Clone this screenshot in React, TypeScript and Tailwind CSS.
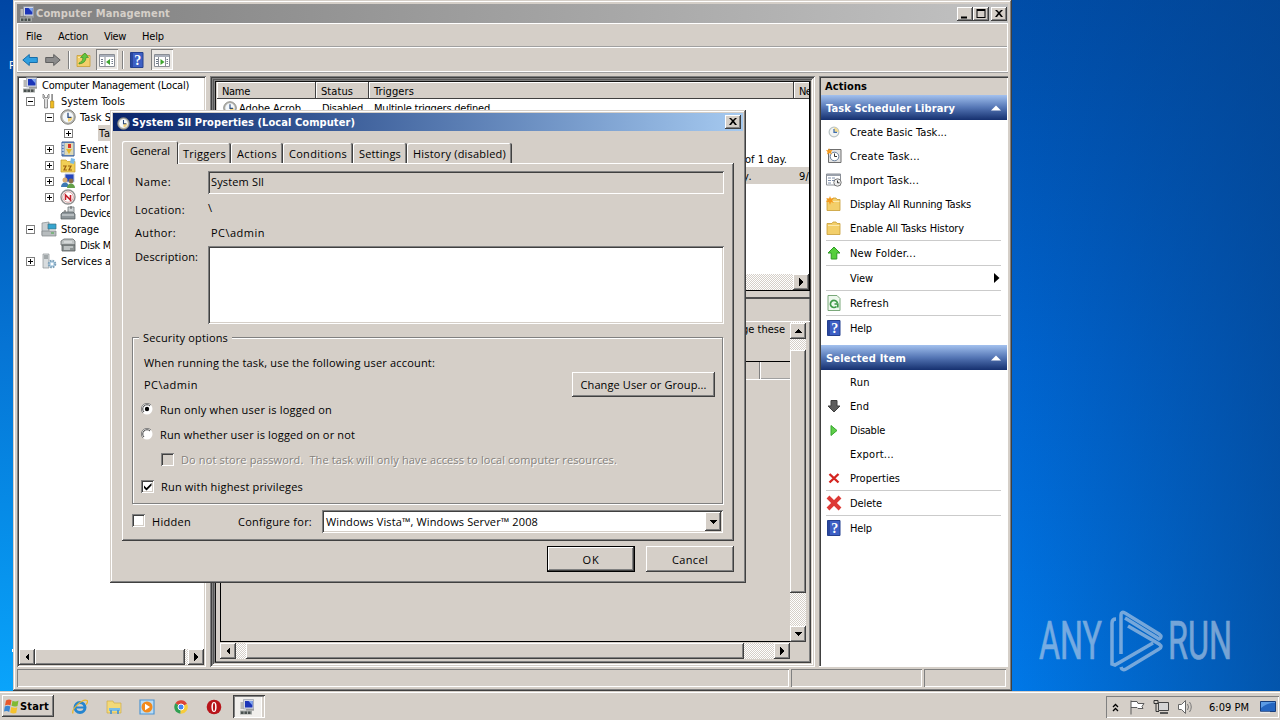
import { useLayoutEffect, useRef, useState } from 'react';
import type { ReactNode } from 'react';

const raised = 'bg-[#d5cfc8] shadow-[inset_-1px_-1px_#404040,inset_1px_1px_#fff,inset_-2px_-2px_#808080]';
const sunken = 'shadow-[inset_1px_1px_#808080,inset_-1px_-1px_#fff,inset_2px_2px_#404040,inset_-2px_-2px_#d5cfc8]';
const dither = 'bg-[repeating-conic-gradient(#fff_0_25%,#d5cfc8_0_50%)] bg-[length:2px_2px]';

// Spreads the letters so the label takes exactly `w` pixels
function Txt({ w, children, className = '' }: { w?: number; children: string; className?: string }) {
  const ref = useRef<HTMLSpanElement>(null);
  const [spacing, setSpacing] = useState(0);

  useLayoutEffect(() => {
    if (!ref.current || !w) return;
    const natural = ref.current.getBoundingClientRect().width;
    setSpacing((w - natural) / children.length);
  }, [w, children]);

  return (
    <span ref={ref} className={`block w-max whitespace-pre shrink-0 pt-(--drop) ${className}`} style={{ letterSpacing: `${spacing}px` }}>
      {children}
    </span>
  );
}

function Svg({ children, size = 16 }: { children: ReactNode; size?: number }) {
  return (
    <svg width={size} height={size} viewBox="0 0 16 16" className="shrink-0">
      {children}
    </svg>
  );
}

const ClockIcon = ({ size = 16 }: { size?: number }) => (
  <Svg size={size}>
    <circle cx="8" cy="8" r="7.2" fill="#b9b9b4" stroke="#83837e" strokeWidth="1" />
    <circle cx="8" cy="8" r="5.4" fill="#f4f8fb" />
    <path d="M8 8h4.5A5 5 0 0 1 8 12.8z" fill="#f3d27a" />
    <path d="M8 3.8V8.4H11.4" stroke="#2b4a7c" strokeWidth="1.3" fill="none" />
  </Svg>
);

const BasicTaskIcon = () => (
  <Svg size={12}>
    <circle cx="8" cy="8" r="6.5" fill="#f1f3f2" stroke="#b9c3c4" strokeWidth="1.6" />
    <path d="M8 2a6 6 0 0 1 6 6H8z" fill="#f5dc92" />
    <path d="M8 4V8.6H12" stroke="#3f6fb0" strokeWidth="1.7" fill="none" />
  </Svg>
);

const ComputerIcon = () => (
  <Svg>
    <path d="M4.5 .5h10v9.500h-10z" fill="#d4d8e2" stroke="#8a90a0" strokeWidth=".6" />
    <path d="M6 2h7.500v6.500H6z" fill="#1b35b8" />
    <path d="M9.500 2h4v4.500z" fill="#7fa4ee" />
    <path d="M1.500 3h2.500v7H1.500z" fill="#b9b9b6" />
    <path d="M7 10h8v1.700H7z" fill="#9b9c9c" />
    <path d="M1 11.500h12v4H1z" fill="#a2a7a5" />
    <path d="M2 12.500h2.500v2.500H2zM5.500 12.500h2.500v2.500H5.500zM9 12.500h2.500v2.500H9z" fill="#4a514f" />
  </Svg>
);

const ToolsIcon = () => (
  <Svg>
    <path d="M2 1v4l1.500 1.500V15h3V6.500L8 5V1L6.500 2.500v2h-3v-2z" fill="#dedede" stroke="#777" strokeWidth=".8" />
    <path d="M10.300 1h1.600v7h-1.600z" fill="#888" />
    <path d="M9.500 8h3.300v7H9.500z" fill="#eebb22" stroke="#a87d10" strokeWidth=".6" />
  </Svg>
);

const EventIcon = () => (
  <Svg>
    <path d="M2 1h12v14H2z" fill="#6d93c9" stroke="#3d5f95" />
    <path d="M4.500 2h9v12h-9z" fill="#dfd9b4" />
    <path d="M8 3h3v4H8z" fill="#d93327" />
    <path d="M6 8h6l-3 5z" fill="#e4b82c" />
    <path d="M2 3h2M2 6h2M2 9h2M2 12h2" stroke="#fff" />
  </Svg>
);

const SharedIcon = () => (
  <Svg>
    <path d="M1 3h5l1.500 1.500H15V15H1z" fill="#f1cf55" stroke="#c19a2a" strokeWidth=".7" />
    <path d="M11 1l4 1-1 5-4-1z" fill="#79b9e8" />
    <path d="M3 9h3l-2 4h3M8 9h3l-2 4h3" stroke="#9b5f0f" fill="none" strokeWidth="1.200" />
  </Svg>
);

const UsersIcon = () => (
  <Svg>
    <path d="M5 1h9v8H5z" fill="#2545bd" stroke="#bcc6dd" />
    <circle cx="5" cy="7" r="2.500" fill="#d9aa72" />
    <path d="M1 14c0-6 8-6 8 0z" fill="#3d78b4" />
    <circle cx="11" cy="8" r="2.400" fill="#8b6b4a" />
    <path d="M7 15c0-6 8-6 8 0z" fill="#63a04a" />
  </Svg>
);

const PerfIcon = () => (
  <Svg>
    <circle cx="8" cy="8" r="7" fill="#fff" stroke="#8f8f8f" strokeWidth="1.400" />
    <circle cx="8" cy="8" r="5.300" fill="#fff" stroke="#c98a8a" strokeWidth=".8" />
    <path d="M5.500 11V6l5 5V6" stroke="#c4202b" strokeWidth="1.600" fill="none" />
  </Svg>
);

const DeviceIcon = () => (
  <Svg>
    <path d="M8 2h6v6H8z" fill="#cfd4d6" stroke="#70777a" strokeWidth=".8" />
    <path d="M5 5v3M11 1v3" stroke="#555" />
    <path d="M1 9l2-2h10l2 2v5H1z" fill="#8d9599" stroke="#545b5e" strokeWidth=".7" />
    <path d="M2 10h12" stroke="#dfe4e6" />
  </Svg>
);

const StorageIcon = () => (
  <Svg>
    <path d="M1 2l7-1v13H1z" fill="#c8ced1" stroke="#858b8e" strokeWidth=".7" />
    <path d="M7 3h8v5H7z" fill="#36a5cf" stroke="#3e707f" strokeWidth=".7" />
    <path d="M1 10h14v5H1z" fill="#b7bcbe" stroke="#7e8486" strokeWidth=".7" />
    <path d="M10 12h3" stroke="#4a4" />
  </Svg>
);

const DiskIcon = () => (
  <Svg>
    <path d="M1 4l3-2h9l2 2v4H1z" fill="#bfc3c3" stroke="#636868" strokeWidth=".8" />
    <path d="M2 8h13v6H2z" fill="#8e9494" stroke="#555b5b" strokeWidth=".8" />
    <path d="M4 5h8M4 10h9M4 12h6" stroke="#ecefef" />
  </Svg>
);

const ServicesIcon = () => (
  <Svg>
    <path d="M2 1h6v14H2z" fill="#d8dcde" stroke="#8e9497" strokeWidth=".7" />
    <path d="M3 3h4M3 5h4" stroke="#6d7477" />
    <circle cx="11" cy="11" r="3.300" fill="#b7d3e6" stroke="#7ba0ba" strokeWidth="2" strokeDasharray="1.6 1" />
    <circle cx="11" cy="11" r="1.300" fill="#fff" />
  </Svg>
);

const HelpIcon = () => (
  <Svg>
    <path d="M1.500 .5h12.500v15H1.500z" fill="#3d5fc4" stroke="#24408f" />
    <path d="M2 1h2v14H2z" fill="#2a479f" />
    <text x="8.700" y="13" textAnchor="middle" fontSize="14" fontWeight="bold" fill="#fff" fontFamily="Liberation Serif">?</text>
  </Svg>
);

const FolderIcon = ({ star = false, up = false }: { star?: boolean; up?: boolean }) => (
  <Svg>
    <path d="M1 4V14.500h13V3.500h-3l-1-1.500H7L6 3.500H1z" fill="#f3cf6a" stroke="#c79d35" strokeWidth=".8" />
    <path d="M2 5.500h11.400" stroke="#fbe9ae" />
    {star && <path d="M4 0l1 2.500L8 2 6 4.500 8 7 5 6 4 9 3 6 0 6l2-2L0 2l3 .5z" fill="#f59a1c" />}
    {up && <path d="M3 11q4-1 4-5.500H4.500L9 1l3.500 4.500H10Q10 11 3 12z" fill="#62c63e" stroke="#3c8f24" strokeWidth=".7" />}
  </Svg>
);

const TaskIcon = () => (
  <Svg>
    <path d="M2.500 1.500h12.500v13H2.500z" fill="#e3e3e3" stroke="#6f6f6f" />
    <circle cx="8.500" cy="8.500" r="4.300" fill="#fff" stroke="#687f9c" />
    <path d="M8.500 5.500v3H11" stroke="#333" fill="none" />
    <path d="M3 0l1 2.200L6.500 2 5 4l1 2.500L3.500 5 1 6.500 1.500 4 0 2l2.200.2z" fill="#f59a1c" />
  </Svg>
);

const ImportIcon = () => (
  <Svg>
    <path d="M.5 2h14v11H.5z" fill="#fff" stroke="#8a8f96" />
    <path d="M1 3h13" stroke="#9aa0aa" strokeWidth="2" />
    <path d="M2 6h3M6 6h3M2 8.500h3M6 8.500h2M2 11h3" stroke="#7d8da8" />
    <circle cx="11.500" cy="10.500" r="3.700" fill="#eee" stroke="#777" />
    <path d="M11.500 8.500v2.300h2" stroke="#333" fill="none" />
  </Svg>
);

const ArrowIcon = ({ fill, stroke, d }: { fill: string; stroke: string; d: string }) => (
  <Svg>
    <path d={d} fill={fill} stroke={stroke} strokeLinejoin="round" />
  </Svg>
);

const upPath = 'M8 2l6 6h-3.200v6H5.200V8H2z';
const downPath = 'M8 14l6-6h-3V2.500H5V8H2z';
const leftPath = 'M.8 8l6.500-5.500v3h8v5h-8v3z';
const rightPath = 'M15.200 8L8.700 2.500v3h-8v5h8v3z';

const RefreshIcon = () => (
  <Svg>
    <path d="M2 .5h9l3 3v12H2z" fill="#eef8ee" stroke="#7aa87a" />
    <path d="M10.500 11.500A3.600 3.600 0 1 1 11.500 8M11.800 12.500V9H8.500" fill="none" stroke="#3f9a48" strokeWidth="1.700" />
  </Svg>
);

const CrossIcon = ({ big = false }: { big?: boolean }) => (
  <Svg>
    {big ? (
      <path d="M2 2l12 12M14 2L2 14" stroke="#dd3a36" strokeWidth="4" />
    ) : (
      <path d="M3.500 4l9 8.500M12.500 4l-9 8.500" stroke="#d4241f" strokeWidth="2.400" />
    )}
  </Svg>
);

const PaneIcon = ({ flip = false }: { flip?: boolean }) => (
  <Svg>
    <path d="M.5 2.500h15v12H.5z" fill="#fff" stroke="#8a8e95" />
    <path d="M1 4h14" stroke="#aab0bb" strokeWidth="2" />
    <path d={flip ? 'M11.500 5v9M4.500 5v9' : 'M6 5v9'} stroke="#8a8e95" />
    <path d="M2 7.500h2M2 9.500h2M2 11.500h2M12.500 7.500H14M12.500 9.500H14M12.500 11.500H14" stroke="#707a8a" />
    <path d={flip ? 'M6.500 7l4 3-4 3z' : 'M11 7l-4 3 4 3z'} fill="#3fa52f" />
  </Svg>
);

function Tri({ dir }: { dir: 'left' | 'right' | 'up' | 'down' }) {
  const paths = { left: 'M6 0v8L2 4z', right: 'M2 0v8l4-4z', up: 'M0 6h8L4 2z', down: 'M0 2h8L4 6z' };
  return (
    <svg width="8" height="8" shapeRendering="crispEdges">
      <path d={paths[dir]} />
    </svg>
  );
}

function ScrollButton({ dir }: { dir: 'left' | 'right' | 'up' | 'down' }) {
  return <button className={`w-4 h-4 shrink-0 flex items-center justify-center ${raised}`}><Tri dir={dir} /></button>;
}

function CaptionButton({ kind }: { kind: 'min' | 'max' | 'close' }) {
  const paths = { min: 'M3 9.500h6v2H3z', max: 'M2.500 2h9v9h-9zM3.500 4v6h7V4z', close: 'M3 3h2l2 2 2-2h2L8 6l3 4H9L7 7.500 5 10H3l3-4z' };
  return (
    <button className={`w-4 h-3.5 shrink-0 flex items-center justify-center ${raised}`}>
      <svg width="14" height="14"><path d={paths[kind]} fillRule="evenodd" /></svg>
    </button>
  );
}

type Node = { label: string; w?: number; level: number; exp?: '+' | '-'; icon?: ReactNode; selected?: boolean };

const tree: Node[] = [
  { label: 'Computer Management (Local)', w: 147, level: 0, icon: <ComputerIcon /> },
  { label: 'System Tools', w: 64, level: 1, exp: '-', icon: <ToolsIcon /> },
  { label: 'Task S', w: 31, level: 2, exp: '-', icon: <ClockIcon /> },
  { label: 'Ta', w: 12, level: 3, exp: '+', selected: true },
  { label: 'Event', w: 28, level: 2, exp: '+', icon: <EventIcon /> },
  { label: 'Share', w: 29, level: 2, exp: '+', icon: <SharedIcon /> },
  { label: 'Local U', w: 35, level: 2, exp: '+', icon: <UsersIcon /> },
  { label: 'Perfor', w: 30, level: 2, exp: '+', icon: <PerfIcon /> },
  { label: 'Device', w: 32, level: 2, icon: <DeviceIcon /> },
  { label: 'Storage', w: 38, level: 1, exp: '-', icon: <StorageIcon /> },
  { label: 'Disk M', w: 31, level: 2, icon: <DiskIcon /> },
  { label: 'Services a', w: 50, level: 1, exp: '+', icon: <ServicesIcon /> },
];

const indents = ['pl-[5px]', 'pl-[9px]', 'pl-[28px]', 'pl-[47px]'];

function TreeRow({ node }: { node: Node }) {
  return (
    <div className={`h-4 flex items-center ${indents[node.level]}`}>
      {node.level > 0 && (
        <span className="w-[15px] shrink-0">
          {node.exp && (
            <svg width="9" height="9" shapeRendering="crispEdges">
              <path d="M.5.5h8v8h-8z" fill="#fff" stroke="#808080" />
              <path d={node.exp === '+' ? 'M2 4.500h5M4.500 2v5' : 'M2 4.500h5'} stroke="#000" />
            </svg>
          )}
        </span>
      )}
      <span className="w-4 shrink-0">{node.icon}</span>
      <span className={`ml-[3px] pl-px flex items-center h-4 ${node.selected ? 'bg-[#d5cfc8]' : ''}`}>
        <Txt w={node.w}>{node.label}</Txt>
      </span>
    </div>
  );
}

type Action = { label: string; w: number; icon?: ReactNode; sep?: boolean; arrow?: boolean };

const libraryActions: Action[] = [
  { label: 'Create Basic Task...', w: 97, icon: <BasicTaskIcon /> },
  { label: 'Create Task...', w: 70, icon: <TaskIcon /> },
  { label: 'Import Task...', w: 69, icon: <ImportIcon /> },
  { label: 'Display All Running Tasks', w: 121, icon: <FolderIcon star /> },
  { label: 'Enable All Tasks History', w: 114, icon: <FolderIcon />, sep: true },
  { label: 'New Folder...', w: 66, icon: <ArrowIcon d={upPath} fill="#55cf3c" stroke="#2f9a25" />, sep: true },
  { label: 'View', w: 23, sep: true, arrow: true },
  { label: 'Refresh', w: 39, icon: <RefreshIcon />, sep: true },
  { label: 'Help', w: 22, icon: <HelpIcon /> },
];

const itemActions: Action[] = [
  { label: 'Run', w: 20 },
  { label: 'End', w: 19, icon: <ArrowIcon d={downPath} fill="#5c5c5c" stroke="#3e3e3e" /> },
  { label: 'Disable', w: 35, icon: <ArrowIcon d="M5 3.500l6 5-6 5z" fill="#5fcf4a" stroke="#35a52c" /> },
  { label: 'Export...', w: 44 },
  { label: 'Properties', w: 50, icon: <CrossIcon />, sep: true },
  { label: 'Delete', w: 32, icon: <CrossIcon big />, sep: true },
  { label: 'Help', w: 22, icon: <HelpIcon /> },
];

function ActionGroup({ title, w, items }: { title: string; w: number; items: Action[] }) {
  return (
    <section>
      <h3 className="h-[25px] pl-[5px] pr-[6px] flex items-center justify-between text-white font-bold bg-linear-to-b from-[#a3c1ee] via-[#5576b5] to-[#16306f]">
        <Txt w={w}>{title}</Txt>
        <svg width="10" height="6"><path d="M0 5.500L5 .5l5 5z" fill="#fff" /></svg>
      </h3>
      <ul>
        {items.map((a) => (
          <li key={a.label}>
            <div className="h-6 flex items-center pl-[5px] pr-[7px]">
              <span className="w-4 mr-2 shrink-0 flex justify-center">{a.icon}</span>
              <Txt w={a.w}>{a.label}</Txt>
              {a.arrow && <svg width="6" height="10" className="ml-auto"><path d="M0 0l5.500 5L0 10z" /></svg>}
            </div>
            {a.sep && <div className="h-px ml-[5px] mr-[6px] bg-[#cbcbcb]" />}
          </li>
        ))}
      </ul>
    </section>
  );
}

const columns = [
  { label: 'Name', box: 'w-[99px]', w: 28 },
  { label: 'Status', box: 'w-[53px]', w: 32 },
  { label: 'Triggers', box: 'w-[425px]', w: 40 },
  { label: 'Ne', box: 'w-[20px]', w: 12 },
];

function TaskList() {
  return (
    <div className="h-[209px] flex flex-col bg-white border-r border-b border-black overflow-hidden">
      <div className="h-[17px] shrink-0 flex">
        {columns.map((c) => (
          <div key={c.label} className={`${c.box} shrink-0 pl-[5px] flex items-center bg-[#d5cfc8] shadow-[inset_-1px_-1px_#404040,inset_1px_1px_#fff]`}>
            <Txt w={c.w}>{c.label}</Txt>
          </div>
        ))}
      </div>
      <div className="h-[17px] shrink-0 flex items-center">
        <span className="w-[105px] shrink-0 pl-[6px] flex items-center gap-[2px]">
          <ClockIcon size={14} /><Txt w={62}>Adobe Acrob</Txt>
        </span>
        <span className="w-[52px]"><Txt w={41}>Disabled</Txt></span>
        <Txt w={116}>Multiple triggers defined</Txt>
      </div>
      <div className="h-[34px] shrink-0" />
      <div className="h-[17px] shrink-0 flex items-center pl-[528px]"><Txt w={42}>of 1 day.</Txt></div>
      <div className="h-[17px] shrink-0 flex items-center bg-[#d5cfc8] pl-[526px]">
        <span className="w-[56px] shrink-0"><Txt w={10}>y.</Txt></span>
        <Txt w={10}>9/</Txt>
      </div>
      <div className={`mt-auto h-4 flex justify-end ${dither}`}><ScrollButton dir="right" /></div>
    </div>
  );
}

function DetailPane() {
  return (
    <div className="mt-[6px] flex-1 flex flex-col border-t-2 border-t-[#505050] pl-[3px]">
      <div className="h-[22px] shrink-0" />
      <div className="flex-1 flex border-t border-white min-h-0">
        <div className="flex-1 border-l border-b border-black flex flex-col">
          <div className="h-[39px] pl-[521px] [--drop:1px]"><Txt w={43}>ge these</Txt></div>
          <div className="h-[19px] border-t border-t-black border-b border-b-white flex justify-end">
            <div className="w-[31px] border-l border-[#808080] shadow-[inset_1px_0_#fff,inset_0_-1px_#a0a0a0]" />
          </div>
        </div>
        <div className={`w-4 mr-[4px] pt-px flex flex-col ${dither}`}>
          <ScrollButton dir="up" />
          <div className={`mt-[11px] h-[243px] ${raised}`} />
          <div className="flex-1" />
          <ScrollButton dir="down" />
        </div>
      </div>
      <div className={`h-4 mt-px mb-[3px] mr-[20px] flex ${dither}`}>
        <ScrollButton dir="left" />
        <div className={`ml-[10px] w-[498px] ${raised}`} />
        <div className="flex-1" />
        <ScrollButton dir="right" />
      </div>
    </div>
  );
}

function ManagementWindow() {
  return (
    <div className="absolute left-[13px] top-0 w-[999px] h-[691px] p-[4px] flex flex-col bg-[#d5cfc8] shadow-[inset_-1px_-1px_#404040,inset_1px_1px_#d5cfc8,inset_-2px_-2px_#808080,inset_2px_2px_#fff]">
      <header className="h-[19px] shrink-0 pl-[2px] pr-px flex items-center bg-linear-to-r from-[#808080] to-[#c2c2c2] text-[#d5cfc8] font-bold">
        <ComputerIcon />
        <Txt w={134} className="ml-px [--drop:0px]">Computer Management</Txt>
        <div className="ml-auto flex">
          <CaptionButton kind="min" />
          <CaptionButton kind="max" />
          <span className="w-[2px]" />
          <CaptionButton kind="close" />
        </div>
      </header>

      <nav className="h-[25px] shrink-0 flex items-center pl-[8px] border border-white shadow-[inset_0_-1px_#a0a0a0]">
        <Txt w={16} className="mr-4">File</Txt>
        <Txt w={30} className="mr-4">Action</Txt>
        <Txt w={22} className="mr-4">View</Txt>
        <Txt w={22}>Help</Txt>
      </nav>
      <div className="h-6 shrink-0 flex items-center pl-[4px] border border-t-0 border-white shadow-[0_1px_#a0a0a0]">
        <ArrowIcon d={leftPath} fill="#2f9fe0" stroke="#176da8" />
        <span className="w-[7px]" />
        <ArrowIcon d={rightPath} fill="#8b8b8b" stroke="#5f5f5f" />
        <span className="ml-[7px] mr-[7px] w-px h-[18px] bg-[#808080] shadow-[1px_0_#fff]" />
        <FolderIcon up />
        <span className="ml-[4px] w-[22px] h-[21px] flex items-center justify-center bg-[#eae7e3] shadow-[inset_1px_1px_#808080,inset_-1px_-1px_#fff]"><PaneIcon /></span>
        <span className="mx-[4px] w-px h-[18px] bg-[#808080] shadow-[1px_0_#fff]" />
        <span className="ml-[2px]"><HelpIcon /></span>
        <span className="ml-[6px] w-[22px] h-[21px] flex items-center justify-center bg-[#eae7e3] shadow-[inset_1px_1px_#808080,inset_-1px_-1px_#fff]"><PaneIcon flip /></span>
      </div>

      <main className="mt-[4px] h-[591px] shrink-0 flex">
        <div className={`w-[189px] shrink-0 bg-white p-[2px] pl-0 pt-px flex flex-col ${sunken}`}>
          {tree.map((node) => <TreeRow key={node.label} node={node} />)}
          <div className={`mt-auto ml-[2px] h-4 flex ${dither}`}>
            <ScrollButton dir="left" />
            <div className={`w-[150px] ${raised}`} />
            <div className="flex-1" />
            <ScrollButton dir="right" />
          </div>
        </div>

        <div className="ml-[4px] w-[605px] shrink-0 pl-[7px] pt-[6px] pr-[5px] pb-[5px] flex flex-col shadow-[inset_1px_1px_#808080,inset_-1px_-1px_#fff,inset_2px_2px_#404040,inset_-2px_-2px_#d5cfc8,inset_3px_3px_#808080,inset_-3px_-3px_#fff,inset_4px_4px_#555,inset_-4px_-4px_#d5cfc8,inset_5px_5px_#808080,inset_-5px_-5px_#404040,inset_6px_6px_#111,inset_-6px_-6px_#808080]">
          <TaskList />
          <DetailPane />
        </div>

        <aside className="ml-[4px] flex-1 bg-white pt-[2px] pl-[2px] pr-px border-b border-white shadow-[inset_1px_1px_#808080,inset_2px_2px_#404040]">
          <h2 className="h-[17px] pl-[4px] flex items-center font-bold bg-[#d5cfc8] [--drop:0px]"><Txt w={42}>Actions</Txt></h2>
          <ActionGroup title="Task Scheduler Library" w={129} items={libraryActions} />
          <div className="h-[5px]" />
          <ActionGroup title="Selected Item" w={80} items={itemActions} />
        </aside>
      </main>

      <footer className="mt-[2px] h-[18px] flex gap-[2px]">
        <div className="w-[772px] shadow-[inset_1px_1px_#808080,inset_-1px_-1px_#fff]" />
        <div className="w-[131px] shadow-[inset_1px_1px_#808080,inset_-1px_-1px_#fff]" />
        <div className="w-[82px] shadow-[inset_1px_1px_#808080,inset_-1px_-1px_#fff]" />
      </footer>
    </div>
  );
}

function Check({ on = false, disabled = false }: { on?: boolean; disabled?: boolean }) {
  return (
    <span className={`w-[13px] h-[13px] -mt-[2px] shrink-0 flex items-center justify-center ${disabled ? 'bg-[#d5cfc8]' : 'bg-white'} ${sunken}`}>
      {on && <svg width="9" height="9"><path d="M1 3.500v2.500l2.500 2.500L8.500 3.500V1L3.500 6z" /></svg>}
    </span>
  );
}

function Radio({ on = false }: { on?: boolean }) {
  return (
    <svg width="12" height="12" className="shrink-0 -mt-[2px]">
      <circle cx="6" cy="6" r="5.500" fill="#fff" />
      <path d="M2 10A5.500 5.500 0 0 1 10 2" fill="none" stroke="#808080" />
      <path d="M3 9A4.200 4.200 0 0 1 9 3" fill="none" stroke="#404040" />
      {on && <circle cx="6" cy="6" r="2.200" />}
    </svg>
  );
}

const tabs = [
  { label: 'Triggers', w: 43, box: 'w-[53px]' },
  { label: 'Actions', w: 40, box: 'w-[52px]' },
  { label: 'Conditions', w: 58, box: 'w-[70px]' },
  { label: 'Settings', w: 42, box: 'w-[54px]' },
  { label: 'History (disabled)', w: 93, box: 'w-[105px]' },
];

function PropertiesDialog() {
  return (
    <div className="absolute left-[110px] top-[110px] w-[636px] h-[473px] p-[3px] flex flex-col bg-[#d5cfc8] shadow-[inset_-1px_-1px_#404040,inset_1px_1px_#d5cfc8,inset_-2px_-2px_#808080,inset_2px_2px_#fff] [--drop:0px] font-['Open_Sans',sans-serif]">
      <header className="h-[18px] shrink-0 pl-[4px] pr-[2px] flex items-center bg-linear-to-r from-[#0a246a] to-[#a6caf0] text-white font-bold [--drop:2px] font-['DejaVu_Sans_Condensed','DejaVu_Sans',sans-serif]">
        <span className="pt-[2px]"><ClockIcon size={13} /></span>
        <Txt w={223} className="ml-[2px]">System Sll Properties (Local Computer)</Txt>
        <div className="ml-auto flex"><CaptionButton kind="close" /></div>
      </header>

      <div className="mt-[10px] ml-[9px] h-[22px] flex items-end shrink-0">
        <div className="w-[56px] h-[23px] -mb-px relative pl-[8px] pt-[3px] bg-[#d5cfc8] rounded-t-[2px] shadow-[inset_1px_1px_#fff,inset_-1px_0_#404040]">
          <Txt w={40}>General</Txt>
        </div>
        {tabs.map((t) => (
          <div key={t.label} className={`${t.box} h-5 pt-[2px] flex items-center justify-center rounded-t-[2px] shadow-[inset_-1px_0_#404040,inset_1px_1px_#fff,inset_-2px_0_#808080]`}>
            <Txt w={t.w}>{t.label}</Txt>
          </div>
        ))}
      </div>

      <div className={`ml-[9px] w-[612px] h-[378px] shrink-0 pl-[10px] pr-[10px] pt-[8px] flex flex-col ${raised}`}>
        <div className="h-[23px] flex items-center pl-[3px]">
          <span className="w-[73px] pb-[2px]"><Txt w={36}>Name:</Txt></span>
          <div className={`w-[516px] h-[23px] pl-[3px] pb-[2px] flex items-center ${sunken}`}><Txt w={53}>System Sll</Txt></div>
        </div>
        <div className="mt-[7px] h-[18px] flex items-center pl-[3px]">
          <span className="w-[73px]"><Txt w={50}>Location:</Txt></span>
          <Txt className="-mt-1">\</Txt>
        </div>
        <div className="mt-[4px] h-[20px] flex items-center pl-[3px]">
          <span className="w-[76px]"><Txt w={41}>Author:</Txt></span>
          <Txt w={54}>PC\admin</Txt>
        </div>
        <div className="mt-[3px] h-[78px] flex pl-[3px]">
          <span className="w-[73px] pt-[4px]"><Txt w={63}>Description:</Txt></span>
          <div className={`w-[516px] bg-white ${sunken}`} />
        </div>

        <div className="relative mt-[13px] w-[591px] h-[167px] shrink-0 border border-[#808080] shadow-[1px_1px_#fff,inset_1px_1px_#fff] pl-[8px] pt-[16px] flex flex-col">
          <span className="absolute left-[6px] -top-[7px] px-[4px] bg-[#d5cfc8]"><Txt w={85}>Security options</Txt></span>
          <div className="flex">
            <div className="w-[431px] pl-[3px]">
              <div className="h-[18px] flex items-center"><Txt w={291}>When running the task, use the following user account:</Txt></div>
              <div className="mt-[4px] h-[18px] flex items-center"><Txt w={54}>PC\admin</Txt></div>
            </div>
            <button className={`mt-[18px] w-[143px] h-[25px] flex items-center justify-center ${raised}`}>
              <Txt w={126}>Change User or Group...</Txt>
            </button>
          </div>
          <div className="mt-[2px] h-[22px] flex items-center"><Radio on /><Txt w={172} className="ml-[7px]">Run only when user is logged on</Txt></div>
          <div className="mt-[3px] h-[22px] flex items-center"><Radio /><Txt w={195} className="ml-[7px]">Run whether user is logged on or not</Txt></div>
          <div className="mt-[3px] h-[22px] flex items-center pl-[20px] text-[#85817c] text-shadow-[1px_1px_#fff]">
            <Check disabled />
            <Txt w={436} className="ml-[7px]">Do not store password.  The task will only have access to local computer resources.</Txt>
          </div>
          <div className="mt-[5px] h-[22px] flex items-center"><Check on /><Txt w={142} className="ml-[7px]">Run with highest privileges</Txt></div>
        </div>

        <div className="mt-[6px] h-[23px] flex items-center">
          <Check />
          <Txt w={39} className="ml-[7px]">Hidden</Txt>
          <Txt w={74} className="ml-[47px]">Configure for:</Txt>
          <div className={`ml-[10px] w-[401px] h-[23px] p-[2px] pl-[4px] flex items-center bg-white ${sunken}`}>
            <Txt w={212}>Windows Vista™, Windows Server™ 2008</Txt>
            <button className={`ml-auto w-4 h-[19px] flex items-center justify-center ${raised}`}><Tri dir="down" /></button>
          </div>
        </div>
      </div>

      <div className="mt-[5px] pr-[9px] flex justify-end gap-[11px]">
        <button className="w-[88px] h-[26px] pt-px flex items-center justify-center border border-black shadow-[inset_-1px_-1px_#404040,inset_1px_1px_#fff,inset_-2px_-2px_#808080]"><Txt w={17}>OK</Txt></button>
        <button className={`w-[88px] h-[26px] pt-px flex items-center justify-center ${raised}`}><Txt w={36}>Cancel</Txt></button>
      </div>
    </div>
  );
}

function Taskbar() {
  return (
    <div className="absolute left-0 bottom-0 w-full h-[29px] pt-[4px] flex items-start bg-[#d5cfc8] shadow-[inset_0_1px_#d5cfc8,inset_0_2px_#fff]">
      <button className={`ml-[2px] w-[52px] h-[22px] flex items-center pl-[2px] font-bold ${raised}`}>
        <Svg>
          <path d="M2 2.500q3-2 5.500-.3L6.500 7.500Q4 6 1 7.500z" fill="#e8582a" />
          <path d="M8.500 2.700q3 1.500 6-.2L13.500 8q-3 1.300-6-.2z" fill="#80ba34" />
          <path d="M.8 8.500q3-1.500 5.500 0L5.200 14Q3 12.500 0 13.500z" fill="#3a86d2" />
          <path d="M7.300 9q3 1.300 6 .2L12.200 15q-3 1-6-.5z" fill="#f5c22d" />
        </Svg>
        <Txt w={29}>Start</Txt>
      </button>
      <div className="ml-[18px] h-[24px] flex items-center gap-[17.5px]">
        <Svg>
          <circle cx="8" cy="8.500" r="5" fill="none" stroke="#2585cf" strokeWidth="3" />
          <path d="M4 8.500h8.500" stroke="#2585cf" strokeWidth="2" />
          <path d="M1 14.500C-1 10 11-1 15 1.500c1 1 0 3-1 4" fill="none" stroke="#e9b62b" strokeWidth="1.300" />
        </Svg>
        <Svg>
          <path d="M1 2h6l1 2h7v10H1z" fill="#f3d978" stroke="#cfae4a" strokeWidth=".7" />
          <path d="M3 9h11v3H3z" fill="#79bde6" />
          <path d="M4 11h2v4H4zM11 11h2v4h-2z" fill="#5b9cc9" />
        </Svg>
        <Svg>
          <path d="M1 1h14v14H1z" fill="#b9dcf5" stroke="#4e95d3" strokeWidth="1.200" />
          <circle cx="8" cy="8" r="5.500" fill="#f28a1c" />
          <path d="M6 4.800l5 3.200-5 3.200z" fill="#fff" />
        </Svg>
        <Svg>
          <path d="M8 8L2.400 4.300A6.700 6.700 0 0 1 14 5z" fill="#dc4437" />
          <path d="M8 8L2.400 4.300A6.700 6.700 0 0 0 7.500 14.700z" fill="#31a052" />
          <path d="M8 8l6-3a6.700 6.700 0 0 1-6.500 9.700z" fill="#f7cc3b" />
          <circle cx="8" cy="8" r="3" fill="#4285f4" stroke="#fff" />
        </Svg>
        <Svg>
          <circle cx="8" cy="8" r="7.300" fill="#b8141a" />
          <ellipse cx="8" cy="8" rx="2.600" ry="5" fill="#fff" />
          <ellipse cx="8" cy="8" rx="1.100" ry="4" fill="#b8141a" />
        </Svg>
      </div>
      <div className="ml-[11px] w-[32px] h-[23px] flex items-center pl-[6px] bg-[#f1efec] shadow-[inset_1px_1px_#404040,inset_-1px_-1px_#fff,inset_2px_2px_#808080,inset_-3px_0_#d5cfc8,inset_-4px_0_#fff]">
        <ComputerIcon />
      </div>

      <div className="ml-auto mt-[1px] mr-px w-[173px] h-[22px] flex items-center pl-[6px] shadow-[inset_1px_1px_#808080,inset_-1px_-1px_#fff]">
        <svg width="7" height="9"><path d="M1 4l2.500-2.500L6 4M1 8l2.500-2.500L6 8" fill="none" stroke="#000" strokeWidth="1.300" /></svg>
        <svg width="17" height="16" className="ml-[10px]"><path d="M2 1.500v14M2 2.500h6l1 2h6l-2 3 1 2H9l-1-1H2" fill="#fff" stroke="#5b5b5b" /></svg>
        <svg width="17" height="16" className="ml-[7px]">
          <path d="M5.500 3.500h10v8h-10z" fill="#d5d5d5" stroke="#444" />
          <path d="M7 14h8" stroke="#555" strokeWidth="2" />
          <path d="M1 1.500h4v3H1zM3 4.500v8h3" fill="none" stroke="#333" />
        </svg>
        <svg width="17" height="16" className="ml-[7px]">
          <path d="M1.500 5.500h3l4-4v13l-4-4h-3z" fill="#fff" stroke="#666" />
          <path d="M10.500 5q2 3 0 6M12.500 3q3.500 5 0 10" fill="none" stroke="#777" />
        </svg>
        <Txt w={40} className="ml-[15px]">6:09 PM</Txt>
        <svg width="16" height="14" className="ml-auto mr-[3px]">
          <path d="M.5 1.500h15v10H.5z" fill="#2465c0" stroke="#163d7c" />
          <path d="M1 8q7-6 14-5V2H1z" fill="#5c9be4" />
          <path d="M0 12.500h10" stroke="#e8e8e8" strokeWidth="1.500" />
        </svg>
      </div>
    </div>
  );
}

export default function App() {
  return (
    <div className="relative w-[1280px] h-[720px] overflow-hidden bg-linear-to-b from-[#004da8] via-[#0064cf] to-[#007aea] text-black text-[11px] leading-[14px] [--drop:2px] font-['DejaVu_Sans_Condensed','DejaVu_Sans',sans-serif]">
      {/* Desktop */}
      <div className="absolute left-0 top-0 w-[14px] h-[691px] bg-linear-to-b from-[#0046a4] via-[#0674d4] to-[#0aa4fb]" />
      <div className="absolute right-0 top-0 w-[268px] h-[691px] bg-linear-to-r from-transparent to-[#04428c]/65" />
      <span className="absolute left-[9px] top-[59px] text-white">P</span>
      <span className="absolute left-[12px] top-[649px] w-[2px] h-[3px] bg-white" />
      <svg className="absolute left-[1038px] top-[608px] opacity-60" width="204" height="66">
        <g fill="#c3d4e8" stroke="#c3d4e8" strokeWidth=".7" fontFamily="Roboto" fontSize="53">
          <text x="1" y="51" textLength="63" lengthAdjust="spacingAndGlyphs">ANY</text>
          <text x="130" y="51" textLength="64" lengthAdjust="spacingAndGlyphs">RUN</text>
        </g>
        <path d="M78 11q-4 0-4 4v41l3 1 38-22M83 46V7q0-4 4-2l34 21q4 3 0 5L87 10M90 18l31 18q4 3 0 5L88 61q-4 2-5-2" fill="none" stroke="#c3d4e8" strokeWidth="3.500" />
      </svg>

      <ManagementWindow />
      <PropertiesDialog />
      <Taskbar />
    </div>
  );
}
